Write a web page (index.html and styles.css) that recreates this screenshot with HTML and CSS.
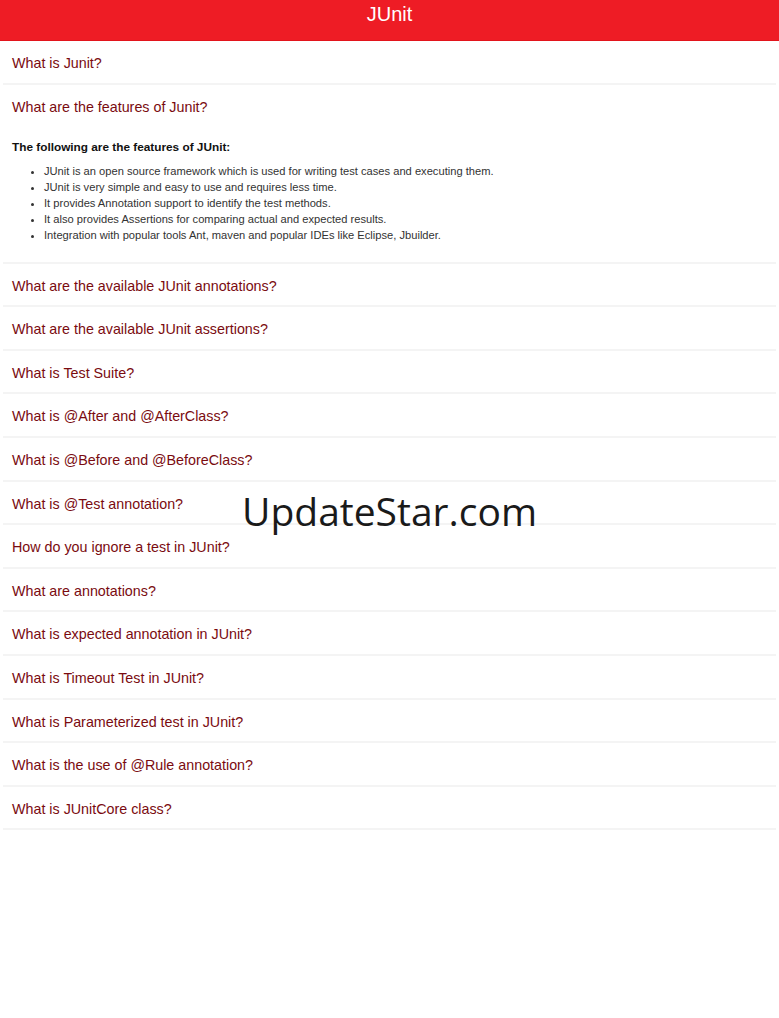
FILE: index.html
```html
<!DOCTYPE html>
<html>
<head>
<meta charset="utf-8">
<link rel="stylesheet" href="styles.css">
</head>
<body>
<header class="bar">JUnit</header>
<div class="list">
  <div class="item"><div class="q">What is Junit?</div></div>
  <div class="item open">
    <div class="q">What are the features of Junit?</div>
    <div class="answer">
      <p class="lead">The following are the features of JUnit:</p>
      <ul>
        <li>JUnit is an open source framework which is used for writing test cases and executing them.</li>
        <li>JUnit is very simple and easy to use and requires less time.</li>
        <li>It provides Annotation support to identify the test methods.</li>
        <li>It also provides Assertions for comparing actual and expected results.</li>
        <li>Integration with popular tools Ant, maven and popular IDEs like Eclipse, Jbuilder.</li>
      </ul>
    </div>
  </div>
  <div class="item"><div class="q">What are the available JUnit annotations?</div></div>
  <div class="item"><div class="q">What are the available JUnit assertions?</div></div>
  <div class="item"><div class="q">What is Test Suite?</div></div>
  <div class="item"><div class="q">What is @After and @AfterClass?</div></div>
  <div class="item"><div class="q">What is @Before and @BeforeClass?</div></div>
  <div class="item"><div class="q">What is @Test annotation?</div></div>
  <div class="item"><div class="q">How do you ignore a test in JUnit?</div></div>
  <div class="item"><div class="q">What are annotations?</div></div>
  <div class="item"><div class="q">What is expected annotation in JUnit?</div></div>
  <div class="item"><div class="q">What is Timeout Test in JUnit?</div></div>
  <div class="item"><div class="q">What is Parameterized test in JUnit?</div></div>
  <div class="item"><div class="q">What is the use of @Rule annotation?</div></div>
  <div class="item"><div class="q">What is JUnitCore class?</div></div>
</div>
<div class="watermark">UpdateStar.com</div>
</body>
</html>
```
FILE: styles.css
```css
html, body {
  margin: 0;
  padding: 0;
  background: #ffffff;
}
body {
  font-family: "Liberation Sans", Arial, sans-serif;
  position: relative;
  min-height: 1018px;
}
.bar {
  height: 41px;
  line-height: 28px;
  background: #ee1c25;
  color: #ffffff;
  text-align: center;
  font-size: 20px;
  box-sizing: border-box;
  border-bottom: 1px solid #e2141c;
}
.list {
  padding: 0 3px;
}
.item {
  border-bottom: 2px solid #f4f4f4;
}
.q {
  height: 41.6px;
  line-height: 45px;
  padding: 0 9px;
  font-size: 14.3px;
  color: #7a0b10;
  overflow: hidden;
}
.answer {
  padding: 13px 9px 18.4px;
  color: #333333;
  font-size: 11.15px;
}
.lead {
  margin: 0;
  font-weight: bold;
  font-size: 11.8px;
  line-height: 16px;
  color: #111111;
}
ul {
  margin: 8px 0 0;
  padding-left: 32px;
}
li {
  line-height: 16px;
}
.watermark {
  position: absolute;
  left: 0;
  right: 0;
  top: 484px;
  text-align: center;
  font-family: "Open Sans", "Noto Sans", sans-serif;
  font-size: 39px;
  color: #1a1a1a;
  line-height: 54px;
}
```
